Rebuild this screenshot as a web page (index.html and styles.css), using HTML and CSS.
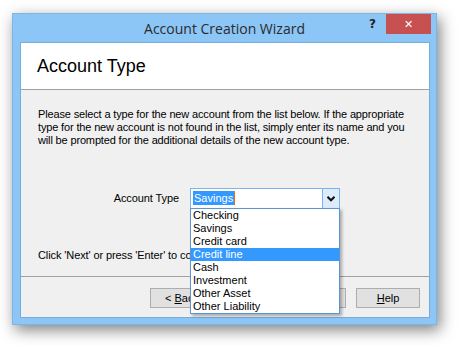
FILE: index.html
```html
<!DOCTYPE html>
<html lang="en">
<head>
    <meta charset="utf-8" />
    <title>Account Creation Wizard</title>
    <link rel="stylesheet" href="styles.css">
</head>
<body>
    <div class="window">
        <div class="titlebar">
            <div></div>
            <div class="title">Account Creation Wizard</div>
            <div class="controls">
                <span class="help-icon">?</span>
                <span class="close-btn">&#x2715;</span>
            </div>
        </div>

        <div class="client">
            <div class="page-header">Account Type</div>

            <div class="page-body">
                <p class="intro">
                    Please select a type for the new account from the list below. If the appropriate<br>
                    type for the new account is not found in the list, simply enter its name and you<br>
                    will be prompted for the additional details of the new account type.
                </p>

                <div class="type-row">
                    <label class="type-label">Account Type</label>
                    <div class="combo">
                        <div class="combo-text"><span class="selected">Savings</span><span class="caret"></span></div>
                        <div class="combo-arrow">
                            <svg width="8" height="6" viewBox="0 0 8 6">
                                <path d="M0.5 0.8 L4 4.3 L7.5 0.8" fill="none" stroke="#111" stroke-width="2" />
                            </svg>
                        </div>

                        <ul class="combo-list">
                            <li>Checking</li>
                            <li>Savings</li>
                            <li>Credit card</li>
                            <li class="active">Credit line</li>
                            <li>Cash</li>
                            <li>Investment</li>
                            <li>Other Asset</li>
                            <li>Other Liability</li>
                        </ul>
                    </div>
                </div>

                <p class="hint">Click 'Next' or press 'Enter' to continue.</p>
            </div>

            <div class="page-footer">
                <button class="btn">&lt; <u>B</u>ack</button>
                <button class="btn">Next &gt;</button>
                <button class="btn btn-cancel">Cancel</button>
                <button class="btn btn-help"><u>H</u>elp</button>
            </div>
        </div>
    </div>
</body>
</html>
```

FILE: styles.css
```css
* {
    margin: 0;
    padding: 0;
    box-sizing: border-box;
}

body {
    width: 458px;
    height: 345px;
    background: #ffffff;
    font-family: 'Liberation Sans', Arial, sans-serif;
    font-size: 11px;
    color: #000;
    overflow: hidden;
}

.window {
    margin: 13px 0 0 12px;
    width: 425px;
    height: 312px;
    background: #8cc6f7;
    border: 1px solid #7db6e6;
    box-shadow: 3px 5px 14px rgba(0, 0, 0, 0.5);
    display: flex;
    flex-direction: column;
}

/* title bar */
.titlebar {
    height: 28px;
    display: grid;
    grid-template-columns: 1fr auto 1fr;
    align-items: start;
}

.title {
    font-family: 'Open Sans', 'Noto Sans', sans-serif;
    font-size: 14px;
    color: #2b2b2b;
    line-height: 29px;
}

.controls {
    display: flex;
    justify-content: flex-end;
    align-items: flex-start;
    margin-right: 5px;
}

.help-icon {
    font-family: 'DejaVu Sans', sans-serif;
    font-weight: bold;
    font-size: 12px;
    color: #222;
    margin: 3px 10px 0 0;
}

.close-btn {
    width: 45px;
    height: 20px;
    background: #c75050;
    color: #fff;
    font-family: 'DejaVu Sans', sans-serif;
    font-size: 11px;
    font-weight: bold;
    display: flex;
    align-items: center;
    justify-content: center;
}

/* client area */
.client {
    flex: 1;
    min-height: 0;
    margin: 0 6px 6px 7px;
    border: 1px solid #78acdc;
    background: #f0f0f0;
    display: flex;
    flex-direction: column;
}

.page-header {
    height: 47px;
    background: #fff;
    border-bottom: 1px solid #a0a0a0;
    padding-left: 16px;
    font-size: 18px;
    line-height: 46px;
    color: #000;
}

.page-body {
    flex: 1;
    min-height: 0;
    padding: 18px 0 0 17px;
    line-height: 13px;
    white-space: nowrap;
}

.intro {
    letter-spacing: -0.15px;
}

.type-row {
    display: flex;
    align-items: center;
    margin-top: 41px;
}

.type-label {
    width: 141px;
    text-align: right;
    margin-right: 11px;
    letter-spacing: -0.1px;
}

.combo {
    position: relative;
    width: 150px;
    height: 21px;
    border: 1px solid #7eb4ea;
    background: #fff;
    display: flex;
}

.combo-text {
    flex: 1;
    padding: 2px 0 0 2px;
    display: flex;
    align-items: flex-start;
}

.selected {
    background: #3399ff;
    color: #fff;
    padding: 0 1px;
    line-height: 14px;
}

.caret {
    width: 1px;
    height: 14px;
    background: #e0701a;
}

.combo-arrow {
    width: 17px;
    background: #dcecfc;
    border-left: 1px solid #7eb4ea;
    display: flex;
    align-items: center;
    justify-content: center;
}

.combo-list {
    position: absolute;
    left: -1px;
    top: 19px;
    width: 150px;
    list-style: none;
    background: #fff;
    border: 1px solid #5f94d4;
    box-shadow: 2px 2px 3px rgba(0, 0, 0, 0.3);
    z-index: 2;
}

.combo-list li {
    height: 13px;
    line-height: 13px;
    padding-left: 2px;
}

.combo-list li.active {
    background: #3399ff;
    color: #fff;
}

.hint {
    margin-top: 40px;
    letter-spacing: -0.1px;
}

/* footer buttons */
.page-footer {
    height: 41px;
    flex-shrink: 0;
    border-top: 1px solid #a0a0a0;
    display: flex;
    justify-content: flex-end;
    align-items: flex-start;
    padding: 11px 9px 0 0;
}

.btn {
    width: 64px;
    height: 20px;
    background: #e1e1e1;
    border: 1px solid #adadad;
    font-family: 'Liberation Sans', Arial, sans-serif;
    font-size: 11px;
    color: #000;
}

.btn-cancel {
    margin-left: 4px;
}

.btn-help {
    margin-left: 10px;
}
```
